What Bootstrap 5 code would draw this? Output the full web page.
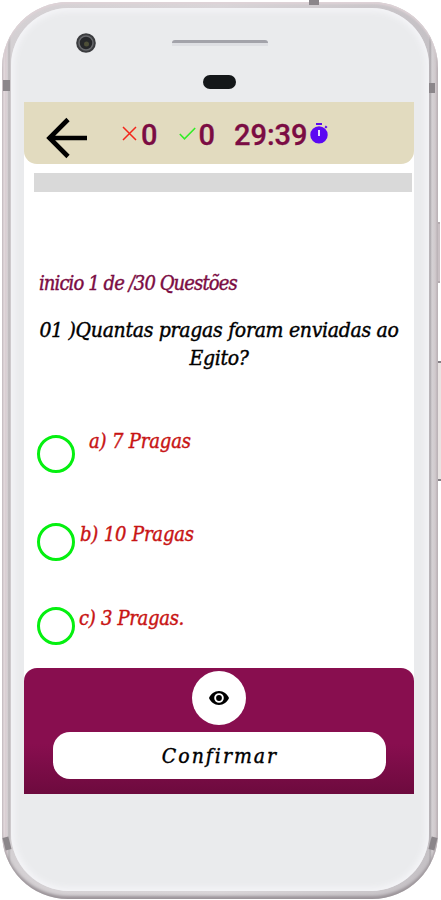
<!DOCTYPE html>
<html lang="pt-BR">
<head>
<meta charset="utf-8">
<meta name="viewport" content="width=device-width, initial-scale=1">
<title>Quiz</title>
<link href="https://cdn.jsdelivr.net/npm/bootstrap@5.3.0/dist/css/bootstrap.min.css" rel="stylesheet">
<style>
body{width:441px;height:900px;background:#fff;overflow:hidden}
svg{display:block;flex:none}
.phone{width:436px;height:897px;margin:2px 2px 0 2px;border-radius:66px;padding:6px 9px 8px 9px;
 background:linear-gradient(90deg,#cfc7cb 0,#e6dfe2 2px,#d6c9ce 4px,#dcd7da 5px,#b9b5b8 7px,#d4d0d3 9px,#d9d5d8 50%,#c5c1c5 427px,#aaa6aa 428px,#d5d1d4 430px,#cfc8cb 434px,#b5adb1 436px);
 box-shadow:inset 0 2px 2px #dfd3d7,inset 0 -3px 3px #9b9499}
.shell{border-radius:58px;background:#eaebed;box-shadow:inset 0 0 6px 3px #f5f5f8}
.top-area{height:94px}
.band{background:#8b868a}
.cam{left:65px;top:25px}
.speaker{left:161px;top:32px;width:96px;height:6px;border-top:3px solid #a3a3aa;border-radius:3px 3px 0 0;background:#dedfe3}
.sensor{left:192px;top:67px;width:33px;height:14px;border-radius:7px;background:#141719}
.band-l{left:3px;top:80px;width:7px;height:11px}
.band-r{left:429px;top:83px;width:6px;height:10px}
.band-t{left:309px;top:0;width:10px;height:5px}
.band-bl{left:4px;top:837px;width:6px;height:13px;transform:rotate(-14deg)}
.band-br{left:430px;top:837px;width:6px;height:13px;transform:rotate(14deg)}
.side-key{left:438px;width:3px;background:#e9e4e3;border:solid #858085;border-width:2px 0}
.key-1{top:361px;height:120px}
.key-2{top:222px;height:61px;width:2px;background:#c9c0c4;border-color:#b5acb0}
.screen{width:390px;height:692px;margin-left:13px;background:#fff}
.bar-top{height:62px;background:#e2dbbf;border-radius:0 0 13px 13px;padding-left:22px;font:500 29px/1 Roboto,sans-serif;color:#7b0c43;-webkit-text-stroke:.3px currentColor}
.arrow{margin-top:9px}
.wrong{margin-left:34px}
.zero1{margin:4px 0 0 4px}
.right{margin-left:22px}
.zero2{margin:4px 0 0 2px}
.clock{margin:4px 0 0 19px}
.timer{margin-left:2px}
.track{height:19px;margin:9px 2px 0 10px;background:#d9d9d9}
.quiz{font-family:"DejaVu Serif Condensed","DejaVu Serif",serif;font-stretch:condensed;font-style:italic;white-space:nowrap;-webkit-text-stroke:.4px currentColor}
.counter{margin:78px 0 0 15px;font-size:20px;line-height:26px;color:#7b0c43;letter-spacing:-.9px}
.question{margin-top:20px;font-size:21px;line-height:28px;color:#000;letter-spacing:-.3px}
.opt{padding-left:13px;font-size:20px;line-height:26px;color:#c81414;letter-spacing:-.15px}
.opt-a{margin-top:56px;height:45px}
.opt-b{margin-top:48px;height:40px}
.opt-c{margin-top:44px;height:40px;letter-spacing:-.3px}
.opt-a .ring{margin:7px 14px 0 0}
.opt-b .ring,.opt-c .ring{margin:2px 5px 0 0}
.opt-c .ring{margin-right:4px}
.ring{width:38px;height:38px;border:3.500px solid #05f010;border-radius:50%;flex:none}
.foot{height:126px;background:linear-gradient(#880e4f 60%,#6d0a3e);border-radius:13px 13px 0 0}
.eye{width:54px;height:54px;margin-top:3px}
.confirm{width:333px;height:47px;margin-top:7px;background:#fff;border-radius:17px;font-size:21px;letter-spacing:2px;color:#000;padding:3px 0 0 2px;border:0}
</style>
<script src="https://cdn.jsdelivr.net/npm/bootstrap@5.3.0/dist/js/bootstrap.bundle.min.js"></script>
</head>
<body class="position-relative">
<div class="phone">
 <div class="shell h-100">
  <div class="top-area position-relative">
   <svg class="cam position-absolute" width="20" height="20" viewBox="0 0 20 20"><circle cx="10" cy="10" r="9.800" fill="#3b3c3f"/><circle cx="10" cy="10" r="7" fill="#26272a" stroke="#68696d" stroke-width="1.500"/><circle cx="10.500" cy="11" r="2.500" fill="#4d4e38"/></svg>
   <div class="speaker position-absolute"></div>
   <div class="sensor position-absolute"></div>
  </div>
  <main class="screen d-flex flex-column">
   <header class="bar-top d-flex align-items-center">
    <svg class="arrow" width="42" height="42" viewBox="0 0 42 42" fill="none" stroke="#000" stroke-width="4.6"><path d="M41 21H4M22 2.500 3.500 21 22 39.500"/></svg>
    <svg class="wrong" width="15" height="15" viewBox="0 0 15 15" stroke="#f3261b" stroke-width="1.5"><path d="M1 1 14 14M14 1 1 14"/></svg>
    <span class="zero1">0</span>
    <svg class="right" width="17" height="13" viewBox="0 0 17 13" fill="none" stroke="#32ed26" stroke-width="1.6"><path d="M.8 7 5.500 11.800 16.200 1"/></svg>
    <span class="zero2">0</span>
    <span class="clock">29:39</span>
    <svg class="timer" width="18" height="21" viewBox="0 0 18 21"><path fill="#5b08f2" d="M6 0h6v2H6zM9 3.200A8.700 8.700 0 1 0 9 20.600 8.700 8.700 0 0 0 9 3.200zM14.500 4.200l1.300-1.600 1.700 1.500-1.500 1.500z"/><path stroke="#e2dbff" stroke-width="2" d="M9 7v6"/></svg>
   </header>
   <div class="track"></div>
   <div class="quiz counter"><span>inicio 1 de /30 Questões</span></div>
   <div class="quiz question text-center"><span>01 )Quantas pragas foram enviadas ao</span><br><span>Egito?</span></div>
   <div class="quiz opt opt-a d-flex"><i class="ring"></i><span>a) 7 Pragas</span></div>
   <div class="quiz opt opt-b d-flex"><i class="ring"></i><span>b) 10 Pragas</span></div>
   <div class="quiz opt opt-c d-flex"><i class="ring"></i><span>c) 3 Pragas.</span></div>
   <footer class="foot mt-auto d-flex flex-column align-items-center">
    <div class="eye bg-white rounded-circle d-flex align-items-center justify-content-center">
     <svg width="20" height="14" viewBox="0 0 20 14"><path fill="#000" fill-rule="evenodd" d="M10 0C5.500 0 1.700 2.900 0 7c1.700 4.100 5.500 7 10 7s8.300-2.900 10-7c-1.700-4.100-5.500-7-10-7zm0 11.800a4.800 4.800 0 1 1 0-9.600 4.800 4.800 0 0 1 0 9.600z"/><circle cx="10" cy="7" r="2.900"/></svg>
    </div>
    <button class="quiz confirm">Confirmar</button>
   </footer>
  </main>
 </div>
</div>
<i class="band band-l position-absolute"></i>
<i class="band band-r position-absolute"></i>
<i class="band band-t position-absolute"></i>
<i class="band band-bl position-absolute"></i>
<i class="band band-br position-absolute"></i>
<i class="side-key key-1 position-absolute"></i>
<i class="side-key key-2 position-absolute"></i>
</body>
</html>
